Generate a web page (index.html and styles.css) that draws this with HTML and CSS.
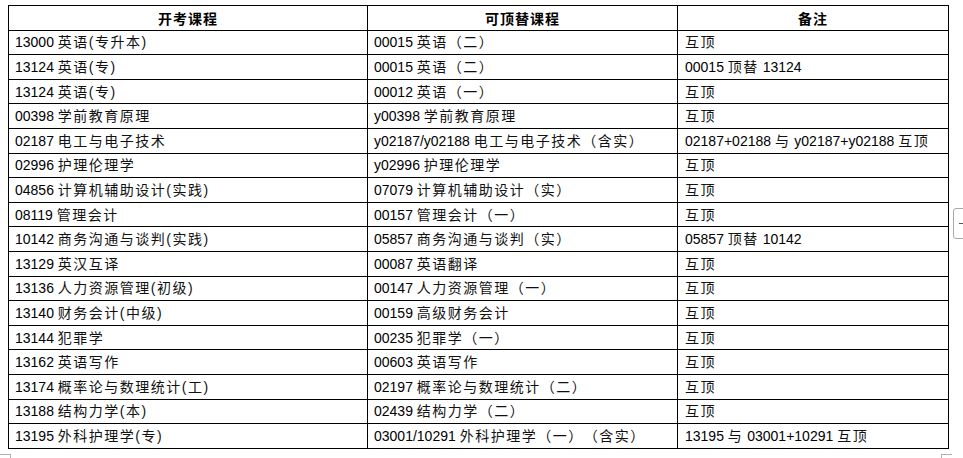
FILE: index.html
```html
<!DOCTYPE html>
<html lang="zh-CN">
<head>
<meta charset="utf-8">
<title>课程顶替表</title>
<link rel="stylesheet" href="styles.css">
</head>
<body>
<table class="course-table">
  <colgroup>
    <col class="c1">
    <col class="c2">
    <col class="c3">
  </colgroup>
  <thead>
    <tr><th>开考课程</th><th>可顶替课程</th><th>备注</th></tr>
  </thead>
  <tbody>
    <tr><td>13000 <span class="zh">英语(专升本)</span></td><td>00015 <span class="zh">英语（二）</span></td><td class="note"><span class="zh">互顶</span></td></tr>
    <tr><td>13124 <span class="zh">英语(专)</span></td><td>00015 <span class="zh">英语（二）</span></td><td class="note">00015 <span class="zh">顶替</span> 13124</td></tr>
    <tr><td>13124 <span class="zh">英语(专)</span></td><td>00012 <span class="zh">英语（一）</span></td><td class="note"><span class="zh">互顶</span></td></tr>
    <tr><td>00398 <span class="zh">学前教育原理</span></td><td>y00398 <span class="zh">学前教育原理</span></td><td class="note"><span class="zh">互顶</span></td></tr>
    <tr><td>02187 <span class="zh">电工与电子技术</span></td><td>y02187/y02188 <span class="zh">电工与电子技术（含实）</span></td><td class="note">02187+02188 <span class="zh">与</span> y02187+y02188 <span class="zh">互顶</span></td></tr>
    <tr><td>02996 <span class="zh">护理伦理学</span></td><td>y02996 <span class="zh">护理伦理学</span></td><td class="note"><span class="zh">互顶</span></td></tr>
    <tr><td>04856 <span class="zh">计算机辅助设计(实践)</span></td><td>07079 <span class="zh">计算机辅助设计（实）</span></td><td class="note"><span class="zh">互顶</span></td></tr>
    <tr><td>08119 <span class="zh">管理会计</span></td><td>00157 <span class="zh">管理会计（一）</span></td><td class="note"><span class="zh">互顶</span></td></tr>
    <tr><td>10142 <span class="zh">商务沟通与谈判(实践)</span></td><td>05857 <span class="zh">商务沟通与谈判（实）</span></td><td class="note">05857 <span class="zh">顶替</span> 10142</td></tr>
    <tr><td>13129 <span class="zh">英汉互译</span></td><td>00087 <span class="zh">英语翻译</span></td><td class="note"><span class="zh">互顶</span></td></tr>
    <tr><td>13136 <span class="zh">人力资源管理(初级)</span></td><td>00147 <span class="zh">人力资源管理（一）</span></td><td class="note"><span class="zh">互顶</span></td></tr>
    <tr><td>13140 <span class="zh">财务会计(中级)</span></td><td>00159 <span class="zh">高级财务会计</span></td><td class="note"><span class="zh">互顶</span></td></tr>
    <tr><td>13144 <span class="zh">犯罪学</span></td><td>00235 <span class="zh">犯罪学（一）</span></td><td class="note"><span class="zh">互顶</span></td></tr>
    <tr><td>13162 <span class="zh">英语写作</span></td><td>00603 <span class="zh">英语写作</span></td><td class="note"><span class="zh">互顶</span></td></tr>
    <tr><td>13174 <span class="zh">概率论与数理统计(工)</span></td><td>02197 <span class="zh">概率论与数理统计（二）</span></td><td class="note"><span class="zh">互顶</span></td></tr>
    <tr><td>13188 <span class="zh">结构力学(本)</span></td><td>02439 <span class="zh">结构力学（二）</span></td><td class="note"><span class="zh">互顶</span></td></tr>
    <tr><td>13195 <span class="zh">外科护理学(专)</span></td><td>03001/10291 <span class="zh">外科护理学（一）（含实）</span></td><td class="note">13195 <span class="zh">与</span> 03001+10291 <span class="zh">互顶</span></td></tr>
  </tbody>
</table>
<div class="side-handle"><span class="dash"></span></div>
<div class="mark mark-left"></div>
<div class="mark mark-right"></div>
</body>
</html>
```
FILE: styles.css
```css
html, body {
  margin: 0;
  padding: 0;
  background: #ffffff;
}
body {
  position: relative;
  width: 963px;
  height: 458px;
  overflow: hidden;
  padding: 5px 0 0 8px;
  box-sizing: border-box;
  font-family: "Liberation Sans", "Noto Sans CJK SC", sans-serif;
  font-size: 14px;
  color: #000;
}
.course-table {
  border-collapse: collapse;
  table-layout: fixed;
  width: 940px;
}
.c1 { width: 359px; }
.c2 { width: 310px; }
.c3 { width: 271px; }
.course-table th,
.course-table td {
  border: 1px solid #000;
  height: 23.6px;
  padding: 0 6px;
  line-height: 16px;
  white-space: nowrap;
  overflow: hidden;
  text-align: left;
  vertical-align: middle;
}
.course-table th {
  text-align: center;
  font-weight: bold;
  font-family: "Noto Sans CJK SC", sans-serif;
  letter-spacing: 1px;
}
.course-table td.note {
  padding-left: 7px;
}
.zh {
  letter-spacing: 1.5px;
  text-spacing-trim: space-all;
  font-feature-settings: "halt" 0, "chws" 0;
  color: #111;
}
.side-handle {
  position: absolute;
  left: 953px;
  top: 208px;
  width: 14px;
  height: 31px;
  border: 1px solid #a8a8a8;
  border-radius: 3px;
  box-sizing: border-box;
}
.side-handle .dash {
  position: absolute;
  left: 5px;
  top: 14px;
  width: 4px;
  height: 1px;
  background: #555;
}
.mark {
  position: absolute;
  width: 10px;
  height: 6px;
  border-color: #b0b0b0;
  border-style: solid;
}
.mark-left {
  left: 0;
  top: 454px;
  border-width: 1px 1px 0 0;
}
.mark-right {
  left: 941px;
  top: 454px;
  border-width: 1px 0 0 1px;
}
```
